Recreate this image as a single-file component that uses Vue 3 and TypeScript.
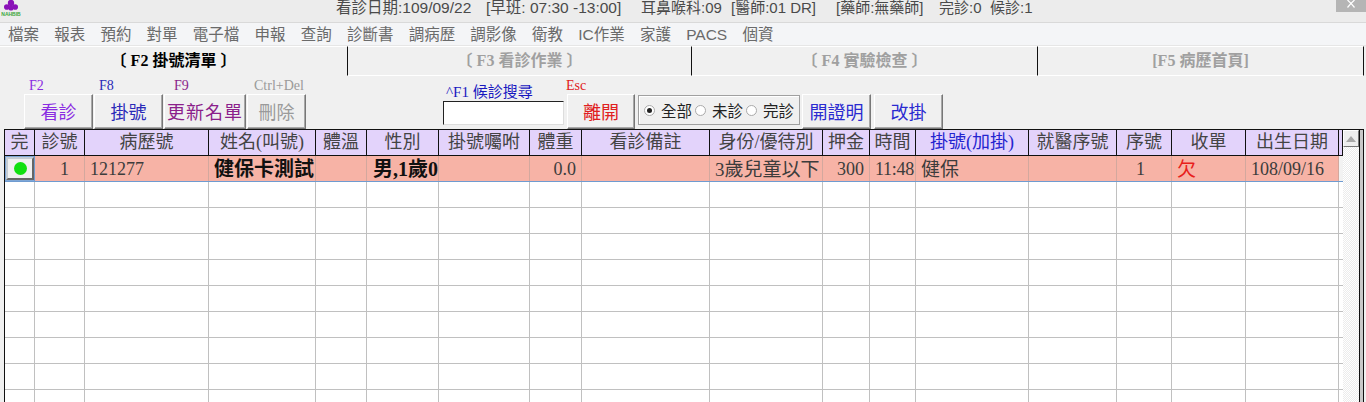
<script setup lang="ts">
interface Col { label: string; width: number; tone?: string }
const cols: Col[] = [
  { label: '完', width: 30 }, { label: '診號', width: 50 }, { label: '病歷號', width: 124 },
  { label: '姓名(叫號)', width: 107 }, { label: '體溫', width: 51 }, { label: '性別', width: 72 },
  { label: '掛號囑咐', width: 91 }, { label: '體重', width: 52 }, { label: '看診備註', width: 128 },
  { label: '身份/優待別', width: 113 }, { label: '押金', width: 47 }, { label: '時間', width: 46 },
  { label: '掛號(加掛)', width: 113, tone: 'blue' }, { label: '就醫序號', width: 88 }, { label: '序號', width: 55 },
  { label: '收單', width: 74 }, { label: '出生日期', width: 93 }, { label: '', width: 4 },
]
const template = cols.map((c) => c.width + 'px').join(' ')
const cells: { text: string; cls: string }[] = [
  { text: '', cls: 'btn-cell' }, { text: '1', cls: 'right r15' }, { text: '121277', cls: 'left' },
  { text: '健保卡測試', cls: 'left bold' }, { text: '', cls: '' }, { text: '男,1歲0', cls: 'left bold ind' },
  { text: '', cls: '' }, { text: '0.0', cls: 'right' }, { text: '', cls: '' },
  { text: '3歲兒童以下', cls: 'left cjk' }, { text: '300', cls: 'right' }, { text: '11:48', cls: 'left tight' },
  { text: '健保', cls: 'left cjk' }, { text: '', cls: '' }, { text: '1', cls: 'right r25' },
  { text: '欠', cls: 'left red' }, { text: '108/09/16', cls: 'left' }, { text: '', cls: 'tail' },
]
const emptyRows = 9
const menus = ['檔案', '報表', '預約', '對單', '電子檔', '申報', '查詢', '診斷書', '調病歷', '調影像', '衛教', 'IC作業', '家護', 'PACS', '個資']
const tabs = [
  { label: '〔 F2 掛號清單 〕', w: 348, active: true },
  { label: '〔 F3 看診作業 〕', w: 344 },
  { label: '〔 F4 實驗檢查 〕', w: 346 },
  { label: '[F5 病歷首頁]', w: 326 },
]
const infos = [
  { text: '看診日期:109/09/22', w: 150, cls: '' },
  { text: '[早班: 07:30 -13:00]', w: 155, cls: '' },
  { text: '耳鼻喉科:09', w: 90, cls: 'sm' },
  { text: '[醫師:01 DR]', w: 105, cls: 'sm' },
  { text: '[藥師:無藥師]', w: 103, cls: 'sm' },
  { text: '完診:0', w: 51, cls: 'sm' },
  { text: '候診:1', w: 50, cls: 'sm' },
]
</script>

<template>
  <div class="page">
    <header class="title">
      <svg class="logo" width="20" height="16" viewBox="0 0 20 16">
        <circle cx="10" cy="3" r="3.2" fill="#8a12b8" />
        <circle cx="5.8" cy="7" r="2.8" fill="#8a12b8" />
        <circle cx="14.2" cy="7" r="2.8" fill="#8a12b8" />
        <circle cx="10" cy="8" r="2.6" fill="#8a12b8" />
        <text x="10" y="15.5" font-size="5" font-weight="700" text-anchor="middle" fill="#3aa83a" font-family="Liberation Sans">NAHBIB</text>
      </svg>
      <div class="title-text">
        <span v-for="i in infos" :key="i.text" :class="i.cls" :style="{ width: i.w + 'px' }">{{ i.text }}</span>
      </div>
      <div class="close"><svg width="10" height="8" viewBox="0 0 10 8"><path d="M1.5 0 5 3.4 8.5 0M1.5 7.5 5 3.4l3.5 4.1" fill="none" stroke="#fff" stroke-width="1.2" /></svg></div>
    </header>
    <nav class="menu"><span v-for="m in menus" :key="m">{{ m }}</span></nav>
    <main class="body">
      <div class="tabs">
        <div v-for="t in tabs" :key="t.label" class="tab" :class="{ active: t.active }" :style="{ width: t.w + 'px' }">{{ t.label }}</div>
      </div>
      <div class="toolbar">
        <div class="group"><span class="key purple">F2</span><button class="b w69 purple">看診</button></div>
        <div class="group"><span class="key navy">F8</span><button class="b w69 navy">掛號</button></div>
        <div class="group"><span class="key plum k10">F9</span><button class="b w82 plum">更新名單</button></div>
        <div class="group"><span class="key grey">Ctrl+Del</span><button class="b w59 grey">刪除</button></div>
        <div class="search">
          <label class="search-label">^F1 候診搜尋</label>
          <input class="search-input" type="text" />
        </div>
        <div class="group leave"><span class="key red esc">Esc</span><button class="b w68 red">離開</button></div>
        <div class="radios">
          <span class="radio on"></span><span class="rl">全部</span>
          <span class="radio"></span><span class="rl">未診</span>
          <span class="radio"></span><span class="rl">完診</span>
        </div>
        <button class="b w69 blue solo">開證明</button>
        <button class="b w69 blue solo s2">改掛</button>
      </div>
      <div class="grid-wrap">
        <div class="grid">
          <div class="row head" :style="{ gridTemplateColumns: template }">
            <div v-for="(c, i) in cols" :key="i" class="hc" :class="c.tone">{{ c.label }}</div>
          </div>
          <div class="row data" :style="{ gridTemplateColumns: template }">
            <div v-for="(c, i) in cells" :key="i" class="dc" :class="c.cls">
              <span v-if="c.cls === 'btn-cell'" class="done"><i></i></span>
              <template v-else>{{ c.text }}</template>
            </div>
          </div>
          <div v-for="n in emptyRows" :key="n" class="row empty" :style="{ gridTemplateColumns: template }">
            <div v-for="(c, i) in cols" :key="i" class="ec"></div>
          </div>
        </div>
        <div class="scroll"><div class="up"><svg width="10" height="6" viewBox="0 0 10 6"><path d="M0 6 5 0l5 6z" fill="#a8a8a8" /></svg></div></div>
        <div class="frame"></div>
      </div>
    </main>
  </div>
</template>

<style scoped>
.page {
  width: 1366px; height: 402px; overflow: hidden; background: #f0f0f0;
  display: flex; flex-direction: column;
  font-family: "Noto Sans CJK TC", "Liberation Sans", sans-serif;
}
.title {
  height: 22px; flex: none; background: #ececec; border-bottom: 1px solid #d9d9d9;
  display: flex; align-items: flex-start; position: relative; color: #4a4a4a; font-size: 15.5px; line-height: 16px;
}
.logo { margin-left: 1px; flex: none; }
.title-text { margin-left: 315px; white-space: nowrap; display: flex; font-family: "Liberation Sans", "Noto Sans CJK TC", sans-serif; }
.title-text span { display: block; flex: none; }
.title-text .sm { font-size: 15px; }
.close {
  position: absolute; right: 0; top: 0; width: 30px; height: 12px; background: #b5b5b5;
  display: flex; justify-content: center; align-items: flex-start;
}
.menu {
  height: 22px; flex: none; background: #f4f5f7; border-bottom: 1px solid #e6e6e6;
  display: flex; gap: 15.2px; padding-left: 8px; align-items: center; color: #6a6a6a;
  font-size: 15.5px; line-height: 21px; white-space: nowrap; font-family: "Liberation Sans", "Noto Sans CJK TC", sans-serif;
}
.body { flex: 1; display: flex; flex-direction: column; min-height: 0; background: #f0f0f0; }
.tabs { display: flex; height: 30px; flex: none; }
.tab {
  box-sizing: border-box; border-right: 1px solid #111; border-top: 1px solid #fff; border-bottom: 1px solid #fff;
  color: #a0a0a0; text-align: center; font-weight: 700;
  font-size: 16px; line-height: 27px; font-family: "Liberation Serif", "Noto Sans CJK TC", serif; white-space: pre;
}
.tab.active { color: #000; border-bottom-color: transparent; }
.toolbar { display: flex; height: 53px; flex: none; padding-left: 24px; align-items: flex-end; font-family: "Noto Sans CJK TC", sans-serif; }
.group { display: flex; flex-direction: column; margin-right: 1px; }
.key {
  height: 17px; line-height: 17px; font-size: 14px; padding-left: 5px; white-space: nowrap;
  font-family: "Liberation Serif", serif;
}
.k10 { padding-left: 10px; } .key.grey { padding-left: 7px; } .esc { padding-left: 0; margin-left: -1px; }
.b {
  box-sizing: border-box; height: 35px; background: #f0f0f0; padding: 0 0 2px; font-size: 18px; line-height: 30px;
  border: 1px solid; border-color: #fff #777 #777 #fff; box-shadow: inset -1px -1px 0 #a8a8a8;
  font-family: "Noto Sans CJK TC", sans-serif; white-space: nowrap;
}
.w69 { width: 69px; } .w82 { width: 82px; } .w59 { width: 59px; } .w68 { width: 68px; }
.b.w82 { letter-spacing: 1px; }
.purple { color: #8a2be2; } .navy { color: #2a2ab8; } .plum { color: #8b1f8b; }
.grey { color: #9a9a9a; } .red { color: #e02020; } .blue { color: #2a2ad0; }
.search { margin-left: 136px; width: 121px; display: flex; flex-direction: column; margin-bottom: 4px; flex: none; }
.search-label { height: 17px; line-height: 17px; font-size: 15px; color: #1818c0; padding-left: 3px; white-space: nowrap; font-family: "Liberation Serif", "Noto Sans CJK TC", serif; }
.search-input {
  box-sizing: border-box; height: 24px; width: 121px; background: #fff; padding: 0; margin: 0; outline: 0;
  border: 1px solid; border-color: #222 #ddd #ddd #222;
}
.leave { margin-left: 3px; margin-right: 3px; }
.radios {
  box-sizing: border-box; width: 162px; height: 30px; margin-bottom: 4px; border: 1px solid #a0a0a0; box-shadow: inset 1px 1px 0 #fff;
  display: flex; align-items: center; padding-left: 5px; font-size: 15.5px; color: #222; white-space: nowrap; flex: none;
}
.radio { width: 11px; height: 11px; border-radius: 50%; border: 1px solid #aaa; background: #fff; box-sizing: border-box; margin-right: 6px; flex: none; position: relative; }
.radio.on::after { content: ""; position: absolute; left: 2px; top: 2px; width: 5px; height: 5px; border-radius: 50%; background: #222; }
.rl { width: 34px; }
.solo { margin-left: 2px; flex: none; } .s2 { margin-left: 3px; }
.grid-wrap { flex: 1; display: flex; margin-left: 4px; margin-right: 2px; border-top: 1px solid #111; min-height: 0; overflow: hidden; }
.grid { width: 1338px; flex: none; background: #fff; border-left: 1px solid #111; }
.row { display: grid; }
.head { height: 26px; border-bottom: 1px solid #111; box-sizing: border-box; }
.hc {
  box-sizing: border-box; background: #e3d3fb; border-right: 1px solid #111; text-align: center; color: #444;
  font-size: 18px; line-height: 25px; overflow: hidden; white-space: nowrap;
  font-family: "Liberation Serif", "Noto Sans CJK TC", serif;
}
.hc.blue { color: #2424d0; }
.data { height: 26px; box-sizing: border-box; border-bottom: 1px solid #6f9bd0; background: #f7b3a6; }
.dc {
  box-sizing: border-box; border-right: 1px solid #d3a89e; color: #3c3c3c; font-size: 18px; line-height: 27px; height: 25px; white-space: nowrap;
  font-family: "Liberation Serif", "Noto Sans CJK TC", serif; overflow: hidden;
}
.dc.left { padding-left: 5px; } .dc.right { text-align: right; padding-right: 5px; }
.dc.r15 { padding-right: 15px; } .dc.r25 { padding-right: 26px; }
.dc.tight { padding-left: 5px; letter-spacing: -0.3px; }
.dc.cjk { font-size: 19px; }
.dc.bold { font-weight: 700; color: #111; font-size: 20px; } .dc.ind { padding-left: 6px; }
.dc.red { color: #e8201c; font-size: 19px; }
.dc.tail { background: #f2f2f2; border-right: 0; }
.btn-cell { padding: 1px 0 1px 1px; background: #7fa7d6; border-right-color: #6f9bd0; }
.done {
  display: flex; width: 28px; height: 23px; box-sizing: border-box; background: #f0f0f0; align-items: center; justify-content: center;
  border: 2px solid; border-color: #c4ccd4 #666 #666 #c4ccd4;
}
.done i { width: 13px; height: 13px; border-radius: 50%; background: #10e010; display: block; }
.empty { height: 26px; box-sizing: border-box; border-bottom: 1px solid #c0c0c0; }
.ec { box-sizing: border-box; border-right: 1px solid #c0c0c0; }
.ec:last-child { border-right: 0; }
.scroll {
  width: 16px; flex: none; border-right: 1px solid #111;
  background-color: #f4f4f4; background-image: repeating-conic-gradient(#fff 0 25%, #ececec 0 50%); background-size: 2px 2px;
}
.up { width: 16px; height: 17px; box-sizing: border-box; background: #eee; border: 1px solid; border-color: #fff #777 #777 #fff; display: flex; align-items: center; justify-content: center; }
.frame { width: 3px; flex: none; background: #c8c8c8; border-right: 1px solid #111; }
</style>

<style>
html, body { margin: 0; padding: 0; background: #f0f0f0; }
</style>
